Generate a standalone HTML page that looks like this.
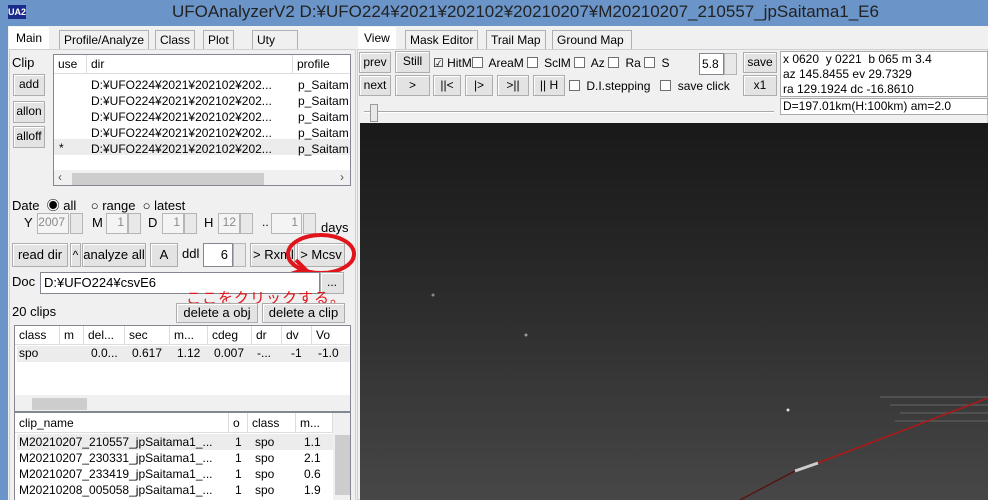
<!DOCTYPE html>
<html><head><meta charset="utf-8"><style>
*{box-sizing:border-box;margin:0;padding:0}
body{width:988px;height:500px;overflow:hidden;background:#6b95c8;font-family:"Liberation Sans","Noto Sans CJK JP",sans-serif;font-size:12px;color:#000;position:relative}
.a{position:absolute;white-space:nowrap}
.btn{position:absolute;background:#e3e3e3;border:1px solid #adadad;box-shadow:inset 1px 1px #fff;text-align:center;font-size:12px;line-height:18px}
.box{position:absolute;background:#fff;border:1px solid #828790}
.tab{position:absolute;border:1px solid #b0b0b0;border-bottom:none;background:#f0f0f0;padding:2px 4px;font-size:12px;line-height:15px}
.cb{display:inline-block;width:11px;height:11px;border:1px solid #707070;background:#fff;vertical-align:-1px;margin-right:3px}
.hd{position:absolute;background:#fff;border-right:1px solid #ddd;border-bottom:1px solid #ddd;padding-left:4px;line-height:18px}
.dis{position:absolute;background:#f4f4f4;border:1px solid #b5b5b5;color:#8a8a8a;text-align:right;padding-right:3px;line-height:17px}
.spin{position:absolute;width:13px;border:1px solid #b5b5b5;background:#e8e8e8}
</style></head><body>
<div class="a" style="left:8px;top:5px;width:18px;height:14px;background:#1a2a8a;color:#fff;font-size:9px;font-weight:bold;line-height:14px;text-align:center">UA2</div>
<div class="a" style="left:172px;top:2px;font-size:17px;color:#222">UFOAnalyzerV2 D:¥UFO224¥2021¥202102¥20210207¥M20210207_210557_jpSaitama1_E6</div>
<div class="a" style="left:8px;top:26px;width:980px;height:474px;background:#f0f0f0"></div>
<!-- left tabs -->
<div class="tab" style="left:9px;top:27px;background:#fff;border-color:#fff;height:22px;padding:3px 6px">Main</div>
<div class="tab" style="left:59px;top:30px">Profile/Analyze</div>
<div class="tab" style="left:155px;top:30px">Class</div>
<div class="tab" style="left:203px;top:30px">Plot</div>
<div class="tab" style="left:252px;top:30px;width:46px">Uty</div>
<div class="a" style="left:9px;top:49px;width:347px;height:451px;background:#f0f0f0;border:1px solid #d0d0d0;border-bottom:none"></div>
<div class="a" style="left:12px;top:55px;font-size:13px">Clip</div>
<div class="btn" style="left:13px;top:74px;width:32px;height:22px">add</div>
<div class="btn" style="left:13px;top:101px;width:32px;height:22px">allon</div>
<div class="btn" style="left:13px;top:126px;width:32px;height:22px">alloff</div>
<div class="box" style="left:53px;top:54px;width:298px;height:132px;overflow:hidden">
 <div class="hd" style="left:0;top:0;width:33px">use</div>
 <div class="hd" style="left:33px;top:0;width:206px">dir</div>
 <div class="hd" style="left:239px;top:0;width:60px">profile</div>
 <div class="a" style="left:0;top:84px;width:298px;height:16px;background:#ececec"></div>
 <div class="a" style="left:37px;top:22px;line-height:16px">D:¥UFO224¥2021¥202102¥202...<br>D:¥UFO224¥2021¥202102¥202...<br>D:¥UFO224¥2021¥202102¥202...<br>D:¥UFO224¥2021¥202102¥202...<br>D:¥UFO224¥2021¥202102¥202...</div>
 <div class="a" style="left:244px;top:22px;line-height:16px">p_Saitam<br>p_Saitam<br>p_Saitam<br>p_Saitam<br>p_Saitam</div>
 <div class="a" style="left:5px;top:86px">*</div>
 <div class="a" style="left:0;top:115px;width:298px;height:17px;background:#f0f0f0"></div>
 <div class="a" style="left:18px;top:118px;width:192px;height:12px;background:#cdcdcd"></div>
 <div class="a" style="left:4px;top:115px;color:#555">‹</div><div class="a" style="left:286px;top:115px;color:#555">›</div>
</div>
<div class="a" style="left:12px;top:195px;font-size:13px">Date &nbsp;◉ all &nbsp;&nbsp;&nbsp;○ range &nbsp;○ latest</div>
<div class="a" style="left:24px;top:215px;font-size:13px">Y</div><div class="dis" style="left:37px;top:213px;width:32px;height:21px">2007</div><div class="spin" style="left:70px;top:213px;height:21px"></div>
<div class="a" style="left:92px;top:215px;font-size:13px">M</div><div class="dis" style="left:106px;top:213px;width:22px;height:21px">1</div><div class="spin" style="left:128px;top:213px;height:21px"></div>
<div class="a" style="left:148px;top:215px;font-size:13px">D</div><div class="dis" style="left:162px;top:213px;width:22px;height:21px">1</div><div class="spin" style="left:184px;top:213px;height:21px"></div>
<div class="a" style="left:204px;top:215px;font-size:13px">H</div><div class="dis" style="left:218px;top:213px;width:22px;height:21px">12</div><div class="spin" style="left:240px;top:213px;height:21px"></div>
<div class="a" style="left:262px;top:215px">..</div><div class="dis" style="left:271px;top:213px;width:31px;height:21px">1</div><div class="spin" style="left:303px;top:213px;height:21px"></div>
<div class="a" style="left:321px;top:220px;font-size:13px">days</div>
<div class="btn" style="left:12px;top:243px;width:56px;height:24px;line-height:22px;font-size:13px">read dir</div>
<div class="btn" style="left:70px;top:243px;width:11px;height:24px;line-height:22px">^</div>
<div class="btn" style="left:82px;top:243px;width:64px;height:24px;line-height:22px;font-size:13px">analyze all</div>
<div class="btn" style="left:150px;top:243px;width:28px;height:24px;line-height:22px;font-size:13px">A</div>
<div class="a" style="left:182px;top:246px;font-size:13px">ddl</div>
<div class="box" style="left:203px;top:243px;width:30px;height:24px;text-align:right;padding-right:4px;line-height:21px;font-size:13px">6</div>
<div class="spin" style="left:233px;top:243px;height:24px"></div>
<div class="btn" style="left:250px;top:243px;width:45px;height:24px;line-height:22px;font-size:13px;text-align:left;padding-left:2px">&gt; Rxml</div>
<div class="btn" style="left:297px;top:243px;width:48px;height:24px;line-height:22px;font-size:13px">&gt; Mcsv</div>
<svg class="a" style="left:0;top:0" width="360" height="310"><ellipse cx="321" cy="254" rx="33" ry="19" fill="none" stroke="#e0141a" stroke-width="4"/><path d="M250 287 L303 270" stroke="#e0141a" stroke-width="4"/><path d="M296 260 L306 270 L294 276" fill="none" stroke="#e0141a" stroke-width="4"/></svg>
<div class="a" style="left:12px;top:274px;font-size:13px">Doc</div>
<div class="box" style="left:40px;top:272px;width:280px;height:22px;line-height:20px;padding-left:3px;font-size:13px">D:¥UFO224¥csvE6</div>
<div class="btn" style="left:320px;top:272px;width:24px;height:22px">...</div>
<div class="a" style="left:186px;top:287px;color:#e0141a;font-size:15px;letter-spacing:1px">ここをクリックする。</div>
<div class="a" style="left:12px;top:304px;font-size:13px">20 clips</div>
<div class="btn" style="left:176px;top:303px;width:82px;height:20px;font-size:13px">delete a obj</div>
<div class="btn" style="left:262px;top:303px;width:83px;height:20px;font-size:13px">delete a clip</div>
<div class="box" style="left:14px;top:325px;width:337px;height:87px;overflow:hidden">
 <div class="hd" style="left:0;top:0;width:45px">class</div><div class="hd" style="left:45px;top:0;width:24px">m</div><div class="hd" style="left:69px;top:0;width:41px">del...</div><div class="hd" style="left:110px;top:0;width:45px">sec</div><div class="hd" style="left:155px;top:0;width:38px">m...</div><div class="hd" style="left:193px;top:0;width:44px">cdeg</div><div class="hd" style="left:237px;top:0;width:30px">dr</div><div class="hd" style="left:267px;top:0;width:30px">dv</div><div class="hd" style="left:297px;top:0;width:40px">Vo</div>
 <div class="a" style="left:2px;top:20px;width:335px;height:16px;background:#ececec"></div>
 <div class="a" style="left:4px;top:20px">spo</div><div class="a" style="left:76px;top:20px">0.0...</div><div class="a" style="left:117px;top:20px">0.617</div><div class="a" style="left:162px;top:20px">1.12</div><div class="a" style="left:199px;top:20px">0.007</div><div class="a" style="left:242px;top:20px">-...</div><div class="a" style="left:276px;top:20px">-1</div><div class="a" style="left:303px;top:20px">-1.0</div>
 <div class="a" style="left:0;top:69px;width:337px;height:17px;background:#f0f0f0"></div>
 <div class="a" style="left:17px;top:72px;width:55px;height:12px;background:#cdcdcd"></div>
</div>
<div class="box" style="left:14px;top:412px;width:337px;height:88px;overflow:hidden;border-bottom:none">
 <div class="hd" style="left:0;top:0;width:214px;height:20px;line-height:20px">clip_name</div><div class="hd" style="left:214px;top:0;width:19px;height:20px;line-height:20px">o</div><div class="hd" style="left:233px;top:0;width:48px;height:20px;line-height:20px">class</div><div class="hd" style="left:281px;top:0;width:37px;height:20px;line-height:20px">m...</div>
 <div class="a" style="left:318px;top:0;width:19px;height:88px;background:#f0f0f0"></div>
 <div class="a" style="left:320px;top:22px;width:15px;height:60px;background:#cdcdcd"></div>
 <div class="a" style="left:2px;top:21px;width:316px;height:16px;background:#ececec"></div>
 <div class="a" style="left:4px;top:21px;line-height:16px">M20210207_210557_jpSaitama1_...<br>M20210207_230331_jpSaitama1_...<br>M20210207_233419_jpSaitama1_...<br>M20210208_005058_jpSaitama1_...</div>
 <div class="a" style="left:220px;top:21px;line-height:16px">1<br>1<br>1<br>1</div>
 <div class="a" style="left:240px;top:21px;line-height:16px">spo<br>spo<br>spo<br>spo</div>
 <div class="a" style="left:289px;top:21px;line-height:16px">1.1<br>2.1<br>0.6<br>1.9</div>
</div>
<!-- right -->
<div class="tab" style="left:358px;top:27px;background:#fff;border-color:#fff;height:22px;padding:3px 5px">View</div>
<div class="tab" style="left:405px;top:30px">Mask Editor</div>
<div class="tab" style="left:486px;top:30px">Trail Map</div>
<div class="tab" style="left:552px;top:30px;width:80px">Ground Map</div>
<div class="a" style="left:357px;top:49px;width:631px;height:451px;background:#f0f0f0;border:1px solid #d0d0d0"></div>
<div class="btn" style="left:359px;top:52px;width:32px;height:21px">prev</div>
<div class="btn" style="left:359px;top:75px;width:32px;height:21px">next</div>
<div class="btn" style="left:395px;top:51px;width:35px;height:22px">Still</div>
<div class="btn" style="left:395px;top:75px;width:35px;height:21px">&gt;</div>
<div class="a" style="left:433px;top:56px">☑ HitM<span class="cb"></span> AreaM<span class="cb" style="margin-left:3px"></span> SclM <span class="cb"></span> Az <span class="cb"></span> Ra <span class="cb"></span> S</div>
<div class="box" style="left:699px;top:53px;width:25px;height:22px;line-height:20px;padding-left:2px">5.8</div>
<div class="spin" style="left:724px;top:53px;height:22px"></div>
<div class="btn" style="left:743px;top:52px;width:34px;height:21px">save</div>
<div class="btn" style="left:743px;top:75px;width:34px;height:21px">x1</div>
<div class="btn" style="left:433px;top:75px;width:28px;height:21px">||&lt;</div>
<div class="btn" style="left:465px;top:75px;width:28px;height:21px">|&gt;</div>
<div class="btn" style="left:497px;top:75px;width:32px;height:21px">&gt;||</div>
<div class="btn" style="left:533px;top:75px;width:32px;height:21px">|| H</div>
<div class="a" style="left:569px;top:79px"><span class="cb"></span> D.I.stepping &nbsp;&nbsp;<span class="cb"></span> save click</div>
<div class="a" style="left:780px;top:51px;width:208px;height:46px;background:#fff;border:1px solid #aaa;padding-left:2px;line-height:15px">x 0620 &nbsp;y 0221 &nbsp;b 065 m 3.4<br>az 145.8455 ev 29.7329<br>ra 129.1924 dc -16.8610</div>
<div class="a" style="left:780px;top:98px;width:208px;height:17px;background:#fff;border:1px solid #aaa;padding-left:2px;line-height:15px">D=197.01km(H:100km) am=2.0</div>
<div class="a" style="left:364px;top:111px;width:410px;height:2px;background:#aaa;border-bottom:1px solid #fff"></div>
<div class="a" style="left:370px;top:104px;width:8px;height:18px;background:#e8e8e8;border:1px solid #999"></div>
<div class="a" style="left:360px;top:123px;width:628px;height:377px;background:linear-gradient(180deg,#191919 0%,#262626 35%,#353535 65%,#474747 100%)"></div>
<svg class="a" style="left:360px;top:123px" width="628" height="377">
<circle cx="73" cy="172" r="1.5" fill="#888"/><circle cx="166" cy="212" r="1.5" fill="#999"/><circle cx="428" cy="287" r="1.5" fill="#ddd"/>
<g stroke="#5a5a5a" stroke-width="2" opacity="0.7"><path d="M520 274 H628"/><path d="M530 282 H628"/><path d="M540 290 H628"/><path d="M535 298 H628"/></g>
<path d="M380 377 L435 348" stroke="#5a1010" stroke-width="1.3"/>
<path d="M435 348 L458 340" stroke="#ccc" stroke-width="3"/>
<path d="M458 340 L628 275" stroke="#b01818" stroke-width="1.5"/>
</svg>
</body></html>
